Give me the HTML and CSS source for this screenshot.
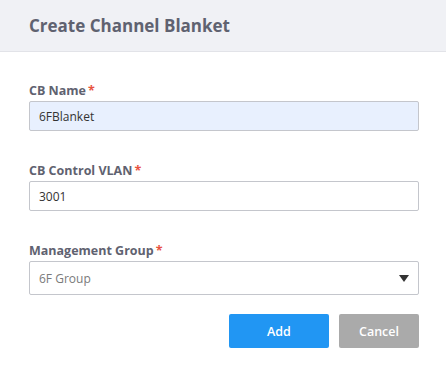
FILE: index.html
```html
<!DOCTYPE html>
<html>
<head>
<meta charset="utf-8">
<link rel="stylesheet" href="styles.css">
</head>
<body>
<div class="dialog">
  <div class="header"><h1 class="title">Create Channel Blanket</h1></div>
  <form class="body">
    <div class="field">
      <label class="label">CB Name<span class="req">*</span></label>
      <div class="input filled">6FBlanket</div>
    </div>
    <div class="field">
      <label class="label">CB Control VLAN<span class="req">*</span></label>
      <div class="input">3001</div>
    </div>
    <div class="field">
      <label class="label">Management Group<span class="req">*</span></label>
      <div class="input select"><span class="sel-text">6F Group</span>
        <svg class="arrow" width="10" height="7" viewBox="0 0 10 7"><path d="M0 0H10L5 7Z" fill="#333"/></svg>
      </div>
    </div>
    <div class="actions">
      <button type="button" class="btn primary">Add</button>
      <button type="button" class="btn cancel">Cancel</button>
    </div>
  </form>
</div>
</body>
</html>
```
FILE: styles.css
```css
* { box-sizing: border-box; }
html, body { margin: 0; padding: 0; background: #fff; }
body { font-family: "Open Sans", "Noto Sans", sans-serif; color: #333; }
.dialog { width: 446px; height: 367px; }
.header { height: 52px; background: #f0f1f5; border-bottom: 1px solid #e2e3e8; padding: 0 29px; display: flex; align-items: center; }
.title { margin: 0; font-size: 17px; font-weight: 700; color: #5f6270; line-height: 1; padding-bottom: 1px; }
.body { padding: 30px 27px 0 29px; display: flex; flex-direction: column; }
.field { display: flex; flex-direction: column; margin-bottom: 31px; }
.label { font-size: 12.5px; font-weight: 700; color: #5f6270; line-height: 17px; margin-bottom: 2px; }
.req { color: #e8533f; margin-left: 2px; }
.input { height: 30px; border: 1px solid #c4c6cc; border-radius: 2px; padding: 0 10px 0 9px; font-size: 12px; color: #333; display: flex; align-items: center; }
.filled { background: #e8f0fe; }
.select { height: 34px; justify-content: space-between; color: #7a7a7a; padding-right: 9px; }
.arrow { display: block; }
.actions { display: flex; justify-content: flex-end; gap: 10px; margin-top: -12px; }
.btn { height: 34px; border: none; border-radius: 2px; font-family: inherit; font-size: 12.5px; font-weight: 600; color: #fff; cursor: pointer; }
.primary { width: 100px; background: #2196f3; }
.cancel { width: 80px; background: #aaaaaa; }
```
